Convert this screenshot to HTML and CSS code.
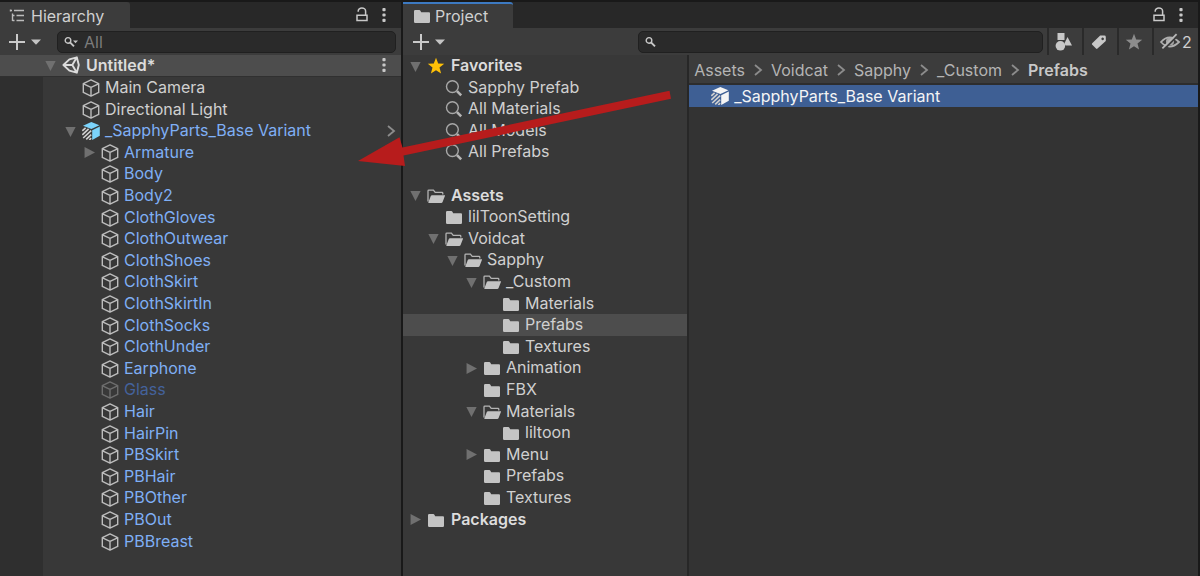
FILE: index.html
```html
<!DOCTYPE html>
<html lang="en">
<head>
<meta charset="utf-8">
<title>Hierarchy and Project</title>
<link rel="stylesheet" href="styles.css">
</head>
<body>
<svg class="defs" aria-hidden="true">
  <symbol id="cube" viewBox="0 0 18 18"><path d="M9 .9 16.7 4.6V13.4L9 17.1 1.3 13.4V4.6ZM1.5 4.8 9 8.4 16.5 4.8M9 8.4V17" fill="none" stroke="#bdbdbd" stroke-width="1.4" stroke-linejoin="round"/></symbol>
  <symbol id="variant" viewBox="0 0 18 18"><path d="M1 3.8 9.3 0 17.4 3.3 9.4 7Z"/><path d="M10.2 8.2 17.8 4.6V13.8L10.2 18Z"/><path d="M.3 8.8 3.6 5.8M.3 12.8 6.6 6.8M1.2 16 9.2 8.6M4.2 17.3 9.2 12.6M7.3 18 9.2 16.2" fill="none" stroke="#d0d0d0" stroke-width="1.6"/></symbol>
  <symbol id="folder" viewBox="0 0 18 18"><path d="M1 4.2Q1 3 2.2 3H6.3Q7 3 7.4 3.8L8.2 5.2H16Q17 5.2 17 6.3V14.8Q17 16 15.8 16H2.2Q1 16 1 14.8Z" fill="#c4c4c4"/></symbol>
  <symbol id="open" viewBox="0 0 18 18"><path d="M1 14.6V4Q1 3.2 1.8 3.2H6.4L8.2 5.4H15Q15.8 5.4 15.8 6.2V7.6" fill="none" stroke="#b4b4b4" stroke-width="1.3"/><path d="M5 8.2H18.2L15.6 15Q15.2 16 14.2 16H1.5Q1.2 16 1.5 15L3.8 9Q4.1 8.2 5 8.2Z" fill="#c4c4c4"/></symbol>
  <symbol id="lens" viewBox="0 0 18 18"><circle cx="7.4" cy="7.6" r="5.9" fill="none" stroke="#a8a8a8" stroke-width="1.4"/><path d="M12 12.2 16.2 16.4" stroke="#b5b5b5" stroke-width="2.6"/></symbol>
  <symbol id="star" viewBox="0 0 18 18"><path d="M9 .8 11.2 6.5 17.2 6.8 12.5 10.6 14.1 16.5 9 13.2 3.9 16.5 5.5 10.6 .8 6.8 6.8 6.5Z"/></symbol>
  <symbol id="down" viewBox="0 0 12 12"><path d="M.4 1H11.6L6 12Z" fill="#707070"/></symbol>
  <symbol id="right" viewBox="0 0 12 12"><path d="M.6 0V12L12 6Z" fill="#707070"/></symbol>
  <symbol id="chev" viewBox="0 0 10 14"><path d="M2 2 8 7 2 12" fill="none" stroke="#8c8c8c" stroke-width="1.8"/></symbol>
  <symbol id="dots" viewBox="0 0 6 16"><g fill="#c8c8c8"><rect x="1.4" y="1" width="3.2" height="3.2" rx="1"/><rect x="1.4" y="6.4" width="3.2" height="3.2" rx="1"/><rect x="1.4" y="11.8" width="3.2" height="3.2" rx="1"/></g></symbol>
  <symbol id="lock" viewBox="0 0 14 16"><path d="M3.2 4.8V4A3.7 3 0 0 1 10.6 4V8" fill="none" stroke="#c8c8c8" stroke-width="1.5"/><path d="M2 8.3H12V13.6H2Z" fill="none" stroke="#c8c8c8" stroke-width="1.5"/></symbol>
  <symbol id="plus" viewBox="0 0 18 18"><path d="M9 1V17M1 9H17" stroke="#cacaca" stroke-width="2"/></symbol>
  <symbol id="caret" viewBox="0 0 10 6"><path d="M0 .4H10L5 5.8Z" fill="#c4c4c4"/></symbol>
  <symbol id="find" viewBox="0 0 14 12"><circle cx="4" cy="4.4" r="2.8" fill="none" stroke="#c8c8c8" stroke-width="1.4"/><path d="M6 6.4 10 10.4" stroke="#c8c8c8" stroke-width="1.9"/></symbol>
</svg>

<main class="editor">
  <section class="panel" aria-label="Hierarchy">
    <header class="tabbar">
      <button class="tab tab-hierarchy"><svg class="i16" viewBox="0 0 16 16"><path d="M1.500 1.500V3.500M1 2.500H3M5 2.500H15M3.500 5.500V13M3.500 7.500H5.500M7.500 7.500H15M3.500 12.500H5.500M7.500 12.500H15" fill="none" stroke="#bcbcbc" stroke-width="1.4"/></svg>Hierarchy</button>
      <div class="tools"><button aria-label="Lock"><svg class="lock"><use href="#lock"/></svg></button><button aria-label="Menu"><svg class="dots"><use href="#dots"/></svg></button></div>
    </header>
    <div class="toolbar">
      <button class="add" aria-label="Create"><svg class="i18"><use href="#plus"/></svg><svg class="caret"><use href="#caret"/></svg></button>
      <label class="search"><svg class="find"><use href="#find"/><path d="M9 4.4H14L11.5 7.2Z" fill="#c4c4c4"/></svg><input type="text" placeholder="All" aria-label="Search hierarchy"></label>
    </div>
    <div class="scene">
      <button class="fold" aria-label="Collapse"><svg><use href="#down"/></svg></button>
      <svg class="i18" viewBox="0 0 18 18"><path d="M14.8 1.3 16.8 9 14.8 16.7 7.4 14.6 1.4 9 7.4 3.4ZM1.4 9H10.3M10.3 9 14.8 1.3M10.3 9 14.8 16.7" fill="none" stroke="#dcdcdc" stroke-width="1.9" stroke-linejoin="round"/></svg>
      <strong>Untitled*</strong>
      <button class="more" aria-label="Scene menu"><svg class="dots"><use href="#dots"/></svg></button>
    </div>
    <ul class="tree objects">
      <li class="l1"><svg class="i18"><use href="#cube"/></svg>Main Camera</li>
      <li class="l1"><svg class="i18"><use href="#cube"/></svg>Directional Light</li>
      <li class="l1 blue"><button class="fold" aria-label="Collapse"><svg><use href="#down"/></svg></button><svg class="i18 prefab"><use href="#variant"/></svg>_SapphyParts_Base Variant<button class="enter" aria-label="Open prefab"><svg class="chev"><use href="#chev"/></svg></button></li>
      <li class="l2 blue"><button class="fold" aria-label="Expand"><svg><use href="#right"/></svg></button><svg class="i18"><use href="#cube"/></svg>Armature</li>
      <li class="l2 blue"><svg class="i18"><use href="#cube"/></svg>Body</li>
      <li class="l2 blue"><svg class="i18"><use href="#cube"/></svg>Body2</li>
      <li class="l2 blue"><svg class="i18"><use href="#cube"/></svg>ClothGloves</li>
      <li class="l2 blue"><svg class="i18"><use href="#cube"/></svg>ClothOutwear</li>
      <li class="l2 blue"><svg class="i18"><use href="#cube"/></svg>ClothShoes</li>
      <li class="l2 blue"><svg class="i18"><use href="#cube"/></svg>ClothSkirt</li>
      <li class="l2 blue"><svg class="i18"><use href="#cube"/></svg>ClothSkirtIn</li>
      <li class="l2 blue"><svg class="i18"><use href="#cube"/></svg>ClothSocks</li>
      <li class="l2 blue"><svg class="i18"><use href="#cube"/></svg>ClothUnder</li>
      <li class="l2 blue"><svg class="i18"><use href="#cube"/></svg>Earphone</li>
      <li class="l2 blue off"><svg class="i18"><use href="#cube"/></svg>Glass</li>
      <li class="l2 blue"><svg class="i18"><use href="#cube"/></svg>Hair</li>
      <li class="l2 blue"><svg class="i18"><use href="#cube"/></svg>HairPin</li>
      <li class="l2 blue"><svg class="i18"><use href="#cube"/></svg>PBSkirt</li>
      <li class="l2 blue"><svg class="i18"><use href="#cube"/></svg>PBHair</li>
      <li class="l2 blue"><svg class="i18"><use href="#cube"/></svg>PBOther</li>
      <li class="l2 blue"><svg class="i18"><use href="#cube"/></svg>PBOut</li>
      <li class="l2 blue"><svg class="i18"><use href="#cube"/></svg>PBBreast</li>
    </ul>
  </section>

  <section class="panel" aria-label="Project">
    <header class="tabbar">
      <button class="tab tab-project"><svg class="i18"><use href="#folder"/></svg>Project</button>
      <div class="tools"><button aria-label="Lock"><svg class="lock"><use href="#lock"/></svg></button><button aria-label="Menu"><svg class="dots"><use href="#dots"/></svg></button></div>
    </header>
    <div class="toolbar toolbar-project">
      <div class="create"><button class="add" aria-label="Create"><svg class="i18"><use href="#plus"/></svg><svg class="caret"><use href="#caret"/></svg></button></div>
      <label class="search"><svg class="find"><use href="#find"/></svg><input type="text" aria-label="Search project"></label>
      <div class="filters">
        <button aria-label="Search by type"><svg class="i18" viewBox="0 0 18 18"><g fill="#c8c8c8"><path d="M2.500 0H9.500V7H2.500Z"/><circle cx="5.400" cy="12.800" r="4.800"/><path d="M12.500 4 17 12.600H10.600L9.400 10.400Z"/></g></svg></button>
        <button aria-label="Search by label"><svg class="i18" viewBox="0 0 18 18"><path fill-rule="evenodd" d="M10.200 2.500H14.400Q15.800 2.500 15.800 3.900V8L7.200 15.800Q6.600 16.200 6 15.600L2 11.600Q1.600 11 2.200 10.300ZM12.600 4.600A1.300 1.300 0 1 0 12.700 4.600Z" fill="#c8c8c8"/></svg></button>
        <button aria-label="Favorite"><svg class="i18" fill="#8c8c8c"><use href="#star"/></svg></button>
        <button class="hidden-count"><svg viewBox="0 0 20 18"><path d="M1 9Q9.500-.2 19 9 9.500 18.200 1 9Z" fill="none" stroke="#b0b0b0" stroke-width="1.800"/><circle cx="10" cy="8.600" r="4" fill="#a8a8a8"/><path d="M3.500 16.800 18 2.400" stroke="#3c3c3c" stroke-width="2"/><path d="M2.400 15.400 16.600 1.200" stroke="#b8b8b8" stroke-width="1.800"/></svg>2</button>
      </div>
    </div>
    <div class="browser">
      <ul class="tree folders">
        <li class="l0 root"><button class="fold" aria-label="Collapse"><svg><use href="#down"/></svg></button><svg class="i18" fill="#ffc107"><use href="#star"/></svg>Favorites</li>
        <li class="l1"><svg class="i18"><use href="#lens"/></svg>Sapphy Prefab</li>
        <li class="l1"><svg class="i18"><use href="#lens"/></svg>All Materials</li>
        <li class="l1"><svg class="i18"><use href="#lens"/></svg>All Models</li>
        <li class="l1"><svg class="i18"><use href="#lens"/></svg>All Prefabs</li>
        <li aria-hidden="true"></li>
        <li class="l0 root"><button class="fold" aria-label="Collapse"><svg><use href="#down"/></svg></button><svg class="i18"><use href="#open"/></svg>Assets</li>
        <li class="l1"><svg class="i18"><use href="#folder"/></svg>lilToonSetting</li>
        <li class="l1"><button class="fold" aria-label="Collapse"><svg><use href="#down"/></svg></button><svg class="i18"><use href="#open"/></svg>Voidcat</li>
        <li class="l2"><button class="fold" aria-label="Collapse"><svg><use href="#down"/></svg></button><svg class="i18"><use href="#open"/></svg>Sapphy</li>
        <li class="l3"><button class="fold" aria-label="Collapse"><svg><use href="#down"/></svg></button><svg class="i18"><use href="#open"/></svg>_Custom</li>
        <li class="l4"><svg class="i18"><use href="#folder"/></svg>Materials</li>
        <li class="l4 current"><svg class="i18"><use href="#folder"/></svg>Prefabs</li>
        <li class="l4"><svg class="i18"><use href="#folder"/></svg>Textures</li>
        <li class="l3"><button class="fold" aria-label="Expand"><svg><use href="#right"/></svg></button><svg class="i18"><use href="#folder"/></svg>Animation</li>
        <li class="l3"><svg class="i18"><use href="#folder"/></svg>FBX</li>
        <li class="l3"><button class="fold" aria-label="Collapse"><svg><use href="#down"/></svg></button><svg class="i18"><use href="#open"/></svg>Materials</li>
        <li class="l4"><svg class="i18"><use href="#folder"/></svg>liltoon</li>
        <li class="l3"><button class="fold" aria-label="Expand"><svg><use href="#right"/></svg></button><svg class="i18"><use href="#folder"/></svg>Menu</li>
        <li class="l3"><svg class="i18"><use href="#folder"/></svg>Prefabs</li>
        <li class="l3"><svg class="i18"><use href="#folder"/></svg>Textures</li>
        <li class="l0 root"><button class="fold" aria-label="Expand"><svg><use href="#right"/></svg></button><svg class="i18"><use href="#folder"/></svg>Packages</li>
      </ul>
      <div class="content">
        <nav class="crumbs" aria-label="Path">
          <a href="#">Assets</a><svg class="chev"><use href="#chev"/></svg>
          <a href="#">Voidcat</a><svg class="chev"><use href="#chev"/></svg>
          <a href="#">Sapphy</a><svg class="chev"><use href="#chev"/></svg>
          <a href="#">_Custom</a><svg class="chev"><use href="#chev"/></svg>
          <a href="#" class="here">Prefabs</a>
        </nav>
        <div class="asset"><svg class="i18"><use href="#variant"/></svg>_SapphyParts_Base Variant</div>
      </div>
    </div>
  </section>
</main>
<svg class="pointer" viewBox="0 0 320 80" aria-hidden="true"><path d="M8 81 49.500 57.300 52.500 67.500 319.500 10.700 321 18.700 53.500 75.500 55 86Z" fill="#b71c1c"/></svg>
</body>
</html>
```
FILE: styles.css
```css
* { box-sizing: border-box; }
body {
  margin: 0;
  background: #191919;
  color: #d0d0d0;
  font: 16px/20px Inter, "Liberation Sans", sans-serif;
}
button {
  display: flex;
  align-items: center;
  padding: 0;
  border: 0;
  background: none;
  color: inherit;
  font: inherit;
}
a { color: inherit; text-decoration: none; }
svg { flex: none; overflow: visible; }
.defs { position: absolute; width: 0; height: 0; }
.i16 { width: 16px; height: 16px; }
.i18 { width: 18px; height: 18px; }
.dots { width: 6px; height: 16px; }
.lock { width: 14px; height: 16px; }
.caret { width: 10px; height: 6px; }
.chev { width: 10px; height: 14px; }
.find { width: 14px; height: 12px; }

.editor {
  display: grid;
  grid-template-columns: 401fr 795fr;
  gap: 2px;
  min-height: 100vh;
  padding: 2px 2px 0 0;
}
.panel { display: flex; flex-direction: column; min-width: 0; background: #383838; }

.tabbar { display: flex; justify-content: space-between; height: 26px; background: #282828; }
.tab { gap: 6px; background: #3c3c3c; border-radius: 0 3px 0 0; }
.tab-hierarchy { padding: 2px 26px 0 9px; }
.tab-project { gap: 4px; padding: 0 25px 0 10px; border-top: 2px solid #3d7ac2; }
.tools { display: flex; gap: 12px; padding-right: 14px; }

.toolbar {
  display: flex;
  align-items: center;
  height: 27px;
  padding: 0 5px 0 8px;
  gap: 16px;
  background: #3c3c3c;
}
.add { gap: 5px; }
.search {
  display: flex;
  flex: 1;
  align-items: center;
  gap: 6px;
  min-width: 0;
  height: 22px;
  padding: 0 6px;
  border: 1px solid #202020;
  border-radius: 5px;
  background: #2a2a2a;
}
.search input {
  flex: 1;
  min-width: 0;
  padding: 0;
  border: 0;
  outline: 0;
  background: none;
  color: inherit;
  font: inherit;
}
.search input::placeholder { color: #7c7c7c; opacity: 1; }
.toolbar-project { gap: 4px; padding: 0 0 0 9px; }
.create { flex: 0 0 222px; }
.filters { display: flex; align-self: stretch; }
.filters button { justify-content: center; width: 35px; padding-right: 4px; border-left: 2px solid #2a2a2a; }
.filters .hidden-count { gap: 2px; width: 46px; padding: 0; }
.hidden-count svg { width: 20px; height: 18px; }

.scene {
  display: flex;
  align-items: center;
  height: 22px;
  padding: 0 14px 1px 41px;
  border-bottom: 1px solid #303030;
  background: #4d4d4d;
  color: #dcdcdc;
}
.scene strong { padding-left: 6px; font-weight: 600; }
.scene .fold { margin-right: 2px; }
.more { margin-left: auto; }
.fold { justify-content: center; width: 19px; }
.fold svg { width: 11px; height: 11px; }

.tree { margin: 0; padding: 0; list-style: none; }
.tree li { display: flex; align-items: center; gap: 5px; height: 22px; padding-bottom: 2px; white-space: nowrap; }
.tree li:nth-child(5n + 2), .tree li:nth-child(5n + 4) { height: 21px; }
.tree svg { margin-top: 2px; }
.tree .fold { margin: 0 -3px 0 -21px; }

.objects { flex: 1; background: linear-gradient(to right, #2f2f2f 43px, transparent 43px); }
.objects .l1 { padding-left: 82px; }
.objects .l2 { padding-left: 101px; }
.blue { color: #7faff5; }
.off { color: #44629c; }
.off svg { opacity: 0.4; }
.prefab { fill: #7bd3fb; }
.enter { margin-left: auto; padding-right: 5px; }

.browser { display: grid; flex: 1; grid-template-columns: 36fr 64fr; }
.folders { border-right: 2px solid #272727; }
.folders .l0 { padding-left: 24px; }
.folders .l1 { padding-left: 42px; }
.folders .l2 { padding-left: 61px; }
.folders .l3 { padding-left: 80px; }
.folders .l4 { padding-left: 99px; }
.folders .root { gap: 6px; color: #dcdcdc; font-weight: 600; }
.folders .root .fold { margin-right: -4px; }
.folders .current { background: #4d4d4d; }

.content { min-width: 0; background: #333333; }
.crumbs {
  display: flex;
  align-items: center;
  gap: 8px;
  height: 30px;
  padding: 2px 5px 0;
  border-bottom: 2px solid #2d2d2d;
  background: #3c3c3c;
  color: #b4b4b4;
}
.crumbs .here { color: #c8c8c8; font-weight: 600; }
.asset {
  display: flex;
  align-items: center;
  gap: 5px;
  height: 22px;
  padding-left: 22px;
  background: #3e5f94;
  color: #f4f4f4;
  fill: #f4f4f4;
}

.pointer { position: absolute; top: 80px; left: 350px; width: 320px; height: 80px; pointer-events: none; }
```
